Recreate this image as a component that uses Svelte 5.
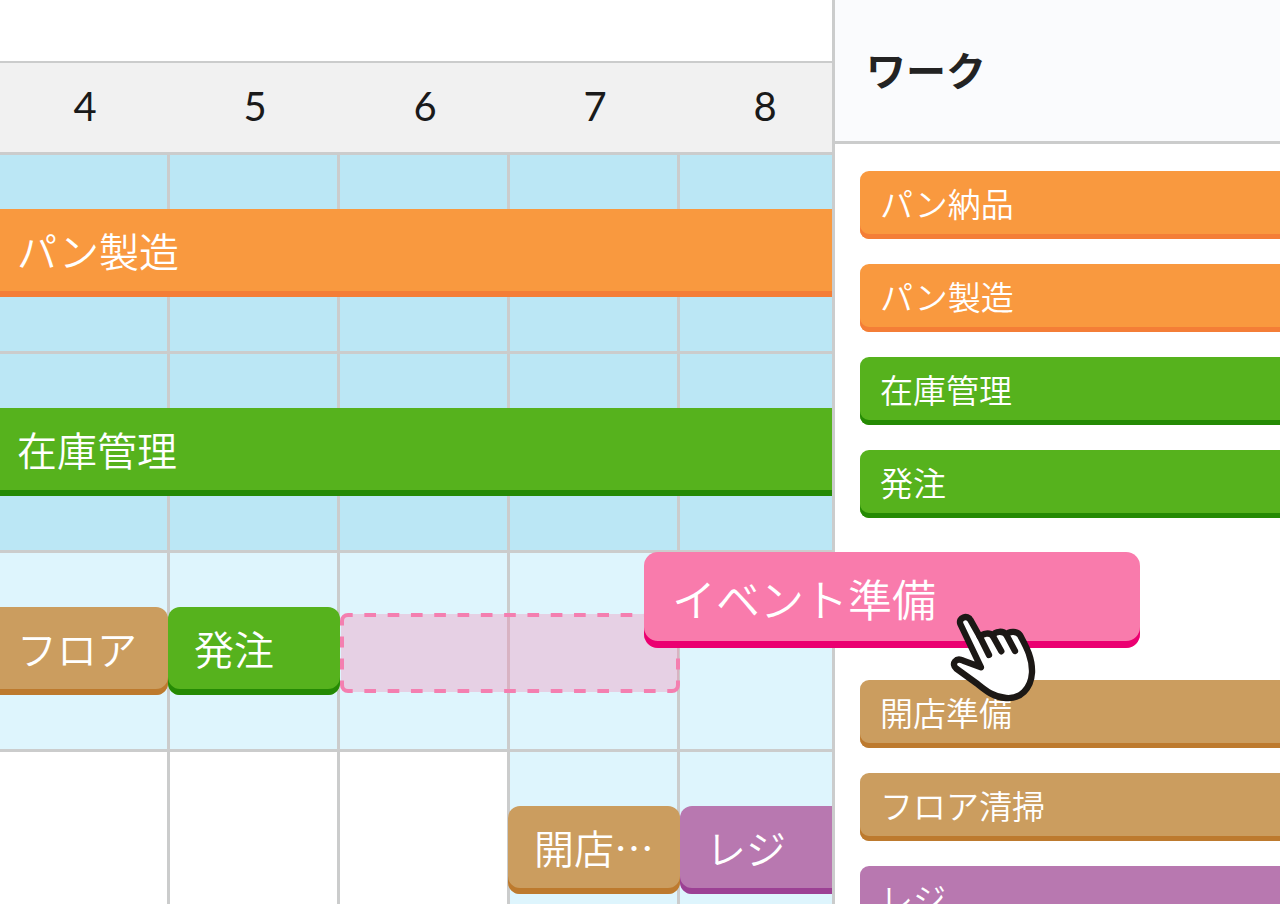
<script lang="ts">
  type Shift = {
    label: string;
    color: string;
    start: number;
    span: number;
    edge?: "through" | "right" | "left";
  };
  type Row = { cells: string[]; shifts: Shift[]; ghost?: boolean };

  const hours = [4, 5, 6, 7, 8];

  const rows: Row[] = [
    {
      cells: ["busy", "busy", "busy", "busy", "busy"],
      shifts: [{ label: "パン製造", color: "orange", start: 1, span: 5, edge: "through" }],
    },
    {
      cells: ["busy", "busy", "busy", "busy", "busy"],
      shifts: [{ label: "在庫管理", color: "green", start: 1, span: 5, edge: "through" }],
    },
    {
      cells: ["open", "open", "open", "open", "open"],
      shifts: [
        { label: "フロア", color: "tan", start: 1, span: 1, edge: "right" },
        { label: "発注", color: "green", start: 2, span: 1 },
      ],
      ghost: true,
    },
    {
      cells: ["", "", "", "open", "open"],
      shifts: [
        { label: "開店…", color: "tan", start: 4, span: 1 },
        { label: "レジ", color: "purple", start: 5, span: 1, edge: "left" },
      ],
    },
  ];

  const worksBefore = [
    { label: "パン納品", color: "orange" },
    { label: "パン製造", color: "orange" },
    { label: "在庫管理", color: "green" },
    { label: "発注", color: "green" },
  ];
  const worksAfter = [
    { label: "開店準備", color: "tan" },
    { label: "フロア清掃", color: "tan" },
    { label: "レジ", color: "purple" },
  ];
</script>

<div class="page" lang="ja">
  <main class="board">
    <div class="hours">
      {#each hours as hour}
        <span>{hour}</span>
      {/each}
    </div>
    {#each rows as row}
      <div class="row">
        {#each row.cells as cell, i}
          <div class={`cell ${cell}`} style={`grid-column: ${i + 1}`}></div>
        {/each}
        {#each row.shifts as shift}
          <button
            class={`shift ${shift.color} ${shift.edge ?? ""}`}
            style={`grid-column: ${shift.start} / span ${shift.span}`}
          >
            {shift.label}
          </button>
        {/each}
        {#if row.ghost}
          <svg class="ghost" viewBox="0 0 340 80" aria-hidden="true">
            <rect class="area" x="1" y="1" width="338" height="78" rx="7" />
            <path
              d="M2 12.5V8a6 6 0 0 1 6-6h4.7M327.3 2H332a6 6 0 0 1 6 6v4.5M338 67.5V72a6 6 0 0 1-6 6h-4.7M12.7 78H8a6 6 0 0 1-6-6v-4.5"
            />
            <path
              d="M12.7 2H327.3M12.7 78H327.3"
              stroke-dasharray="11.65"
              stroke-dashoffset="11.65"
            />
            <path d="M2 12.5V67.5M338 12.5V67.5" stroke-dasharray="11" stroke-dashoffset="11" />
          </svg>
        {/if}
      </div>
    {/each}
  </main>

  <aside class="side">
    <header>
      <h2>ワーク</h2>
    </header>
    <ul>
      {#each worksBefore as work}
        <li><button class={`work ${work.color}`}>{work.label}</button></li>
      {/each}
      <li class="slot">
        <button class="dragging pink">イベント準備</button>
        <svg class="hand" viewBox="60 38 264 270" aria-hidden="true">
          <path
            class="palm"
            d="M153 201L91 71C84 52 113 41 122 60L150 110C158 98 180 96 188 106C196 91 220 91 229 103C238 91 263 92 271 106C284 131 308 170 306 217C303 264 272 297 228 293C188 290 164 268 140 249L79 205C62 190 78 170 100 181Z"
          />
          <path d="M148 106L177 164M188 106L214 153M229 103L255 152" />
        </svg>
      </li>
      {#each worksAfter as work}
        <li><button class={`work ${work.color}`}>{work.label}</button></li>
      {/each}
    </ul>
  </aside>
</div>

<style>
  :global(body) {
    margin: 0;
  }
  .page {
    display: flex;
    height: 100vh;
    overflow: hidden;
    background: #fff;
    color: #1a1a1a;
    font-family: "Noto Sans CJK JP", sans-serif;
  }
  .board {
    box-sizing: border-box;
    width: 65%;
    padding-top: 61px;
    overflow: hidden;
  }
  .hours,
  .row {
    display: grid;
    grid-template-columns: repeat(5, 170px);
    width: max-content;
  }
  .hours {
    box-sizing: border-box;
    height: 94px;
    padding-bottom: 4px;
    align-items: center;
    background: #f1f1f1;
    border-top: 2px solid #cbcccc;
    border-bottom: 3px solid #cbcccc;
    font-family: Lato, sans-serif;
    font-size: 40px;
    line-height: 48px;
    text-align: center;
  }
  .row {
    grid-template-rows: 199px;
  }
  .cell {
    grid-row: 1;
    border-right: 3px solid #cbcccc;
    border-bottom: 3px solid #cbcccc;
  }
  .busy {
    background: #bbe7f5;
  }
  .open {
    background: #def5fd;
  }

  button {
    display: block;
    box-sizing: border-box;
    margin: 0;
    border: 0;
    color: #fff;
    font-family: inherit;
    font-weight: 350;
    text-align: left;
    white-space: nowrap;
    cursor: grab;
  }
  .shift {
    grid-row: 1;
    height: 88px;
    margin: 54px 0 0 -2px;
    padding: 0 0 6px 26px;
    border-radius: 12px;
    box-shadow: inset 0 -6px var(--edge);
    background: var(--fill);
    font-size: 40px;
    line-height: 48px;
  }
  .shift.through {
    margin-left: 0;
    padding-left: 17px;
    border-radius: 0;
  }
  .shift.right {
    margin: 54px 2px 0 0;
    padding-left: 17px;
    border-radius: 0 12px 12px 0;
  }
  .shift.left {
    margin-left: 0;
    border-radius: 12px 0 0 12px;
  }
  .ghost {
    grid-row: 1;
    grid-column: 3 / span 2;
    width: 340px;
    height: 80px;
    margin-top: 60px;
    fill: none;
    stroke: #f47fb0;
    stroke-width: 4;
  }
  .area {
    fill: #f97bac;
    fill-opacity: 0.3;
    stroke: none;
  }

  .side {
    flex: 1;
    min-width: 0;
    border-left: 3px solid #cbcccc;
  }
  header {
    box-sizing: border-box;
    display: flex;
    align-items: center;
    height: 144px;
    padding: 0 0 4px 31px;
    background: #fafbfd;
    border-bottom: 3px solid #cbcccc;
  }
  h2 {
    margin: 0;
    color: #232323;
    font-size: 40px;
    font-weight: 700;
    line-height: 48px;
  }
  ul {
    display: flex;
    flex-direction: column;
    gap: 25px;
    margin: 0;
    padding: 27px 0 0 25px;
    list-style: none;
  }
  .work {
    width: 100%;
    height: 68px;
    padding: 0 0 4px 20px;
    border-radius: 9px 0 0 9px;
    box-shadow: inset 0 -5px var(--edge);
    background: var(--fill);
    font-size: 33px;
    line-height: 40px;
  }
  .slot {
    position: relative;
    z-index: 1;
    height: 112px;
  }
  .dragging {
    position: absolute;
    top: 9px;
    left: -216px;
    width: 496px;
    height: 96px;
    padding: 0 0 4px 28px;
    border-radius: 14px;
    box-shadow: inset 0 -7px var(--edge);
    background: var(--fill);
    font-size: 44px;
    line-height: 52px;
  }
  .hand {
    position: absolute;
    top: 70px;
    left: 90px;
    width: 88px;
    height: 90px;
    fill: none;
    stroke: #1c1815;
    stroke-width: 19;
    stroke-linecap: round;
    stroke-linejoin: round;
    pointer-events: none;
  }
  .palm {
    fill: #fff;
  }

  .orange {
    --fill: #f9993f;
    --edge: #f47e37;
  }
  .green {
    --fill: #56b21d;
    --edge: #258a04;
  }
  .tan {
    --fill: #cb9d5f;
    --edge: #bd7a2e;
  }
  .purple {
    --fill: #b878b0;
    --edge: #9c4194;
  }
  .pink {
    --fill: #f97bac;
    --edge: #eb0071;
  }
</style>
